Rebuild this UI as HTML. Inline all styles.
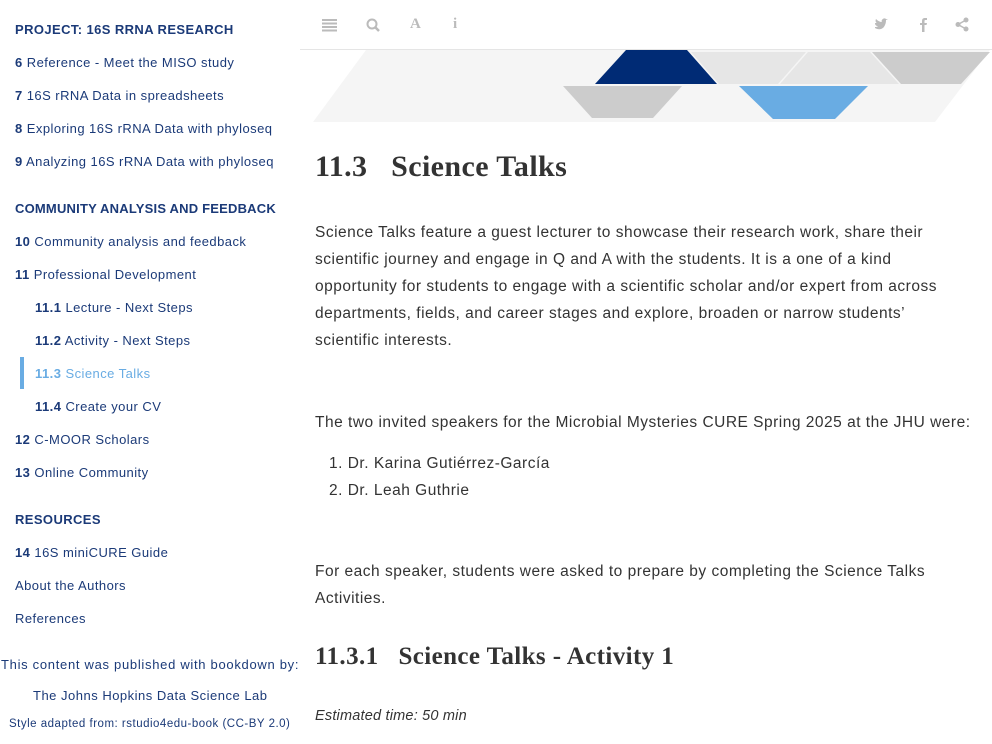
<!DOCTYPE html>
<html><head><meta charset="utf-8"><style>
*{margin:0;padding:0;box-sizing:border-box}
body{width:992px;height:744px;overflow:hidden;background:#fff;font-family:"Liberation Sans",sans-serif;position:relative}
.s{position:absolute;left:15px;font-size:13px;color:#1b3a78;white-space:nowrap;letter-spacing:0.45px}
.s b{font-weight:bold}
.h{font-weight:bold;letter-spacing:0.4px;font-size:13px}
.i2{left:35px}
.act{color:#69ace3}
.c{position:absolute;left:315px;font-size:15.5px;color:#333;line-height:27px;letter-spacing:0.5px}
h2,h3{position:absolute;left:315px;font-family:"Liberation Serif",serif;font-weight:bold;color:#333;white-space:nowrap}
.ic{position:absolute;top:16px;color:#bbb;font-size:15px;font-weight:bold}
</style></head><body>
<div class="s h" style="top:22px">PROJECT: 16S RRNA RESEARCH</div>
<div class="s" style="top:55px"><b>6</b> Reference - Meet the MISO study</div>
<div class="s" style="top:88px"><b>7</b> 16S rRNA Data in spreadsheets</div>
<div class="s" style="top:121px"><b>8</b> Exploring 16S rRNA Data with phyloseq</div>
<div class="s" style="top:154px"><b>9</b> Analyzing 16S rRNA Data with phyloseq</div>
<div class="s h" style="top:201px;letter-spacing:0.2px">COMMUNITY ANALYSIS AND FEEDBACK</div>
<div class="s" style="top:234px"><b>10</b> Community analysis and feedback</div>
<div class="s" style="top:267px"><b>11</b> Professional Development</div>
<div class="s i2" style="top:300px"><b>11.1</b> Lecture - Next Steps</div>
<div class="s i2" style="top:333px"><b>11.2</b> Activity - Next Steps</div>
<div style="position:absolute;left:20px;top:357px;width:4px;height:32px;background:#69ace3"></div>
<div class="s i2 act" style="top:366px"><b>11.3</b> Science Talks</div>
<div class="s i2" style="top:399px"><b>11.4</b> Create your CV</div>
<div class="s" style="top:432px"><b>12</b> C-MOOR Scholars</div>
<div class="s" style="top:465px"><b>13</b> Online Community</div>
<div class="s h" style="top:512px">RESOURCES</div>
<div class="s" style="top:545px"><b>14</b> 16S miniCURE Guide</div>
<div class="s" style="top:578px">About the Authors</div>
<div class="s" style="top:611px">References</div>
<div class="s" style="top:657px;left:1px;letter-spacing:0.7px">This content was published with bookdown by:</div>
<div class="s" style="top:688px;left:33px;letter-spacing:0.5px">The Johns Hopkins Data Science Lab</div>
<div class="s" style="top:718px;left:9px;font-size:11.5px;letter-spacing:0.5px">Style adapted from: rstudio4edu-book (CC-BY 2.0)</div>

<div style="position:absolute;left:300px;top:49px;width:692px;height:1px;background:#e5e5e5"></div>
<svg style="position:absolute;left:322px;top:18px" width="16" height="14"><g fill="#bbb"><rect y="1" width="15" height="2"/><rect y="4.5" width="15" height="2"/><rect y="8" width="15" height="2"/><rect y="11.5" width="15" height="2"/></g></svg>
<svg style="position:absolute;left:366px;top:18px" width="16" height="16"><circle cx="6" cy="6" r="4.5" fill="none" stroke="#bbb" stroke-width="2"/><path d="M9 9l4 4" stroke="#bbb" stroke-width="2.5"/></svg>
<div class="ic" style="left:410px;font-family:'Liberation Serif',serif">A</div>
<div class="ic" style="left:453px;font-family:'Liberation Serif',serif">i</div>
<svg style="position:absolute;left:874px;top:18px" width="14" height="14"><path d="M1 10c3 2 8 2 10-3 1-2 1-4 1-5l2-1-2 0c-1-1-3-1-4 1-1 1 0 2 0 2-2 0-4-1-6-3-1 2 0 4 1 4-1 0-1 0-2 0 0 2 1 3 3 3-1 1-2 1-3 1z" fill="#bbb"/></svg>
<svg style="position:absolute;left:919px;top:17px" width="10" height="15"><path d="M3 15V8H1V6h2V4c0-2 1-3 3-3h2v2H6.5C5.5 3 5.5 3.5 5.5 4.5V6h2.5l-.5 2H5.5v7z" fill="#bbb"/></svg>
<svg style="position:absolute;left:955px;top:17px" width="14" height="15"><g fill="#bbb"><circle cx="11" cy="3" r="2.5"/><circle cx="3" cy="7.5" r="2.5"/><circle cx="11" cy="12" r="2.5"/></g><path d="M11 3L3 7.5l8 4.5" stroke="#bbb" stroke-width="1.5" fill="none"/></svg>

<svg style="position:absolute;left:0;top:0" width="992" height="130">
<polygon points="313,122 366,50 990,50 935,122" fill="#f5f5f5"/>
<polygon points="626,50 687,50 717,84 595,84" fill="#002b75"/>
<polygon points="691,52 806,52 778,84 719,84" fill="#e6e6e6"/>
<polygon points="808,52 870,52 899,84 780,84" fill="#e6e6e6"/>
<polygon points="872,52 990,52 961,84 901,84" fill="#cccccc"/>
<polygon points="563,86 682,86 653,118 592,118" fill="#cccccc"/>
<polygon points="739,86 868,86 835,119 773,119" fill="#69ace3"/>
</svg>

<h2 style="top:150px;font-size:30px;letter-spacing:0.4px">11.3&nbsp;&nbsp;&nbsp;Science Talks</h2>
<div class="c" style="top:219px;white-space:nowrap">Science Talks feature a guest lecturer to showcase their research work, share their<br>scientific journey and engage in Q and A with the students. It is a one of a kind<br>opportunity for students to engage with a scientific scholar and/or expert from across<br>departments, fields, and career stages and explore, broaden or narrow students’<br>scientific interests.</div>
<div class="c" style="top:409px;white-space:nowrap">The two invited speakers for the Microbial Mysteries CURE Spring 2025 at the JHU were:</div>
<div class="c" style="top:450px;left:329px">1. Dr. Karina Gutiérrez-García</div>
<div class="c" style="top:477px;left:329px">2. Dr. Leah Guthrie</div>
<div class="c" style="top:558px;white-space:nowrap">For each speaker, students were asked to prepare by completing the Science Talks<br>Activities.</div>
<h3 style="top:643px;font-size:25px;letter-spacing:0.4px">11.3.1&nbsp;&nbsp;&nbsp;Science Talks - Activity 1</h3>
<div class="c" style="top:703px;font-style:italic;font-size:14.5px;letter-spacing:0.2px">Estimated time: 50 min</div>
</body></html>
